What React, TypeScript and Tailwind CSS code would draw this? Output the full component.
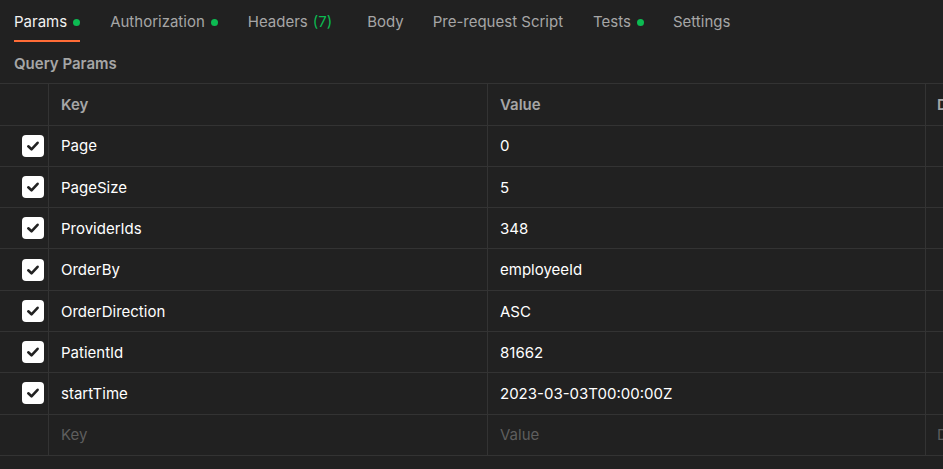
import React from "react";

const tabs = [
  { label: "Params", dot: true, active: true, mr: "mr-[30px]" },
  { label: "Authorization", dot: true, mr: "mr-[30px]" },
  { label: "Headers", count: "(7)", mr: "mr-[35px]" },
  { label: "Body", mr: "mr-[29px]" },
  { label: "Pre-request Script", mr: "mr-[30px]" },
  { label: "Tests", dot: true, mr: "mr-[29px]" },
  { label: "Settings", mr: "mr-[30px]" },
];

const params = [
  ["Page", "0"],
  ["PageSize", "5"],
  ["ProviderIds", "348"],
  ["OrderBy", "employeeId"],
  ["OrderDirection", "ASC"],
  ["PatientId", "81662"],
  ["startTime", "2023-03-03T00:00:00Z"],
];

function Check() {
  return (
    <div className="w-[22px] h-[22px] rounded-[4px] bg-white flex items-center justify-center">
      <svg width="14" height="14" viewBox="0 0 14 14" fill="none">
        <path d="M2.3 7.3 L5.5 10.3 L11.6 3.8" stroke="#212121" strokeWidth="2.6" strokeLinecap="round" strokeLinejoin="round" />
      </svg>
    </div>
  );
}

export default function App() {
  return (
    <div
      className="w-[943px] h-[469px] bg-[#212121] overflow-hidden text-[15px]"
      style={{ fontFamily: "Inter, 'Noto Sans', sans-serif" }}
    >
      <div className="flex h-[43px] pl-[14px] items-start">
        {tabs.map((t, i) => (
          <div key={i} className={`${t.mr} flex flex-col shrink-0`}>
            <div className="h-[40px] pt-[5px] flex items-center whitespace-nowrap">
              <span className={t.active ? "text-[#f2f2f2]" : "text-[#a6a6a6]"}>{t.label}</span>
              {t.count && <span className="ml-[5px] text-[#0cbb52]">{t.count}</span>}
              {t.dot && <span className="ml-[6px] w-[7px] h-[7px] rounded-full bg-[#0cbb52]" />}
            </div>
            <div className={t.active ? "h-[2px] bg-[#ff6c37]" : "h-[2px]"} />
          </div>
        ))}
      </div>
      <div className="h-[40px] pl-[14px] pt-[2px] flex items-center font-semibold text-[#a6a6a6]">Query Params</div>
      <div className="border-t border-[#333333]">
        <div className="flex h-[41.5px] border-b border-[#333333]">
          <div className="w-[49px] shrink-0 border-r border-[#333333]" />
          <div className="w-[439px] shrink-0 border-r border-[#333333] pl-[12px] pt-[2px] flex items-center font-semibold text-[#a6a6a6]">Key</div>
          <div className="w-[438px] shrink-0 border-r border-[#333333] pl-[12px] pt-[2px] flex items-center font-semibold text-[#a6a6a6]">Value</div>
          <div className="w-[200px] shrink-0 pl-[11px] pt-[2px] flex items-center font-semibold text-[#a6a6a6] whitespace-nowrap">Description</div>
        </div>
        {params.map(([k, v], i) => (
          <div key={i} className="flex h-[41.3px] border-b border-[#333333]">
            <div className="w-[49px] shrink-0 border-r border-[#333333] flex items-center justify-end pr-[4px]">
              <Check />
            </div>
            <div className="w-[439px] shrink-0 border-r border-[#333333] pl-[12px] pt-[2px] flex items-center text-white">{k}</div>
            <div className="w-[438px] shrink-0 border-r border-[#333333] pl-[12px] pt-[2px] flex items-center text-white">{v}</div>
            <div className="flex-1" />
          </div>
        ))}
        <div className="flex h-[41.3px] border-b border-[#333333]">
          <div className="w-[49px] shrink-0 border-r border-[#333333]" />
          <div className="w-[439px] shrink-0 border-r border-[#333333] pl-[12px] pt-[2px] flex items-center text-[#5e5e5e]">Key</div>
          <div className="w-[438px] shrink-0 border-r border-[#333333] pl-[12px] pt-[2px] flex items-center text-[#5e5e5e]">Value</div>
          <div className="w-[200px] shrink-0 pl-[11px] pt-[2px] flex items-center text-[#5e5e5e] whitespace-nowrap">Description</div>
        </div>
      </div>
    </div>
  );
}
